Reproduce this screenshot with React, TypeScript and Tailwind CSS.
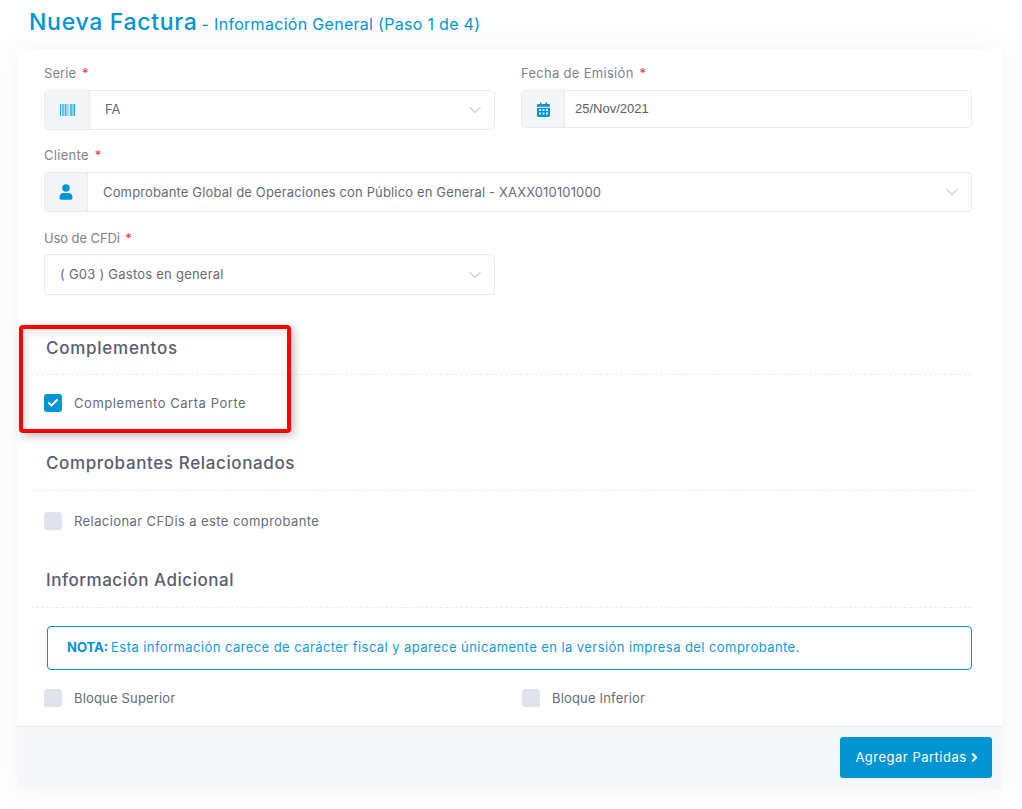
import React from "react";
import { ChevronDown, ChevronRight, Check } from "lucide-react";

const Label = ({ text, className = "" }: { text: string; className?: string }) => (
  <div className={`h-[17px] text-[13px] leading-[17px] text-[#80828f] ${className}`}>
    {text} <span className="ml-[2px] text-[#f0333f]">*</span>
  </div>
);

const Addon = ({ w, children }: { w: string; children: React.ReactNode }) => (
  <div className={`flex shrink-0 items-center justify-center self-stretch border-r border-[#e9ebf3] bg-[#f3f5f9] ${w}`}>{children}</div>
);

const Barcode = () => (
  <svg width="15" height="12" viewBox="0 0 15 12">
    <rect x="0" width="1" height="12" fill="#2ca5dc" />
    <rect x="1" width="1" height="12" fill="#d6eef9" />
    <rect x="2" width="2" height="12" fill="#6fc1e6" />
    <rect x="4" width="1" height="12" fill="#b5dff2" />
    <rect x="5" width="1" height="12" fill="#3dacdf" />
    <rect x="6" width="1" height="12" fill="#8fd0ec" />
    <rect x="7" width="2" height="12" fill="#a5daf1" />
    <rect x="9" width="1" height="12" fill="#d6eef9" />
    <rect x="10" width="2" height="12" fill="#5cb9e3" />
    <rect x="12" width="2" height="12" fill="#8fd0ec" />
    <rect x="14" width="1" height="12" fill="#2ca5dc" />
  </svg>
);

const User = () => (
  <svg width="14" height="16" viewBox="0 0 14 16" fill="#0094d2">
    <circle cx="7" cy="4" r="3.8" />
    <path d="M0.5 13.2C0.5 10.6 2.3 9 4.5 9h5c2.2 0 4 1.6 4 4.2v.8c0 1-.8 1.7-1.7 1.7H2.2C1.3 15.7.5 15 .5 14z" />
  </svg>
);

const Calendar = () => (
  <svg width="13" height="15" viewBox="0 0 13 15">
    <path fill="#0094d2" d="M1.3 2H3V.6h1.4V2h4.2V.6H10V2h1.7c.7 0 1.3.6 1.3 1.3V13.5c0 .8-.6 1.4-1.3 1.4H1.3C.6 14.9 0 14.3 0 13.5V3.3C0 2.6.6 2 1.3 2z" />
    <g fill="#ffffff">
      <rect x="0" y="4.8" width="13" height="1" />
      <rect x="2" y="7.2" width="2" height="1.8" />
      <rect x="5.5" y="7.2" width="2" height="1.8" />
      <rect x="9" y="7.2" width="2" height="1.8" />
      <rect x="2" y="10.6" width="2" height="1.8" />
      <rect x="5.5" y="10.6" width="2" height="1.8" />
      <rect x="9" y="10.6" width="2" height="1.8" />
    </g>
  </svg>
);

const Chevron = () => <ChevronDown size={20} strokeWidth={0.9} className="mr-[9px] shrink-0 text-[#8a8d99]" />;

const SectionHeading = ({ text, className = "" }: { text: string; className?: string }) => (
  <div className={`-ml-[13px] border-b border-dashed border-[#e9ebf1] pl-[15px] ${className}`}>
    <h3 className="text-[17px] font-medium leading-[24px] text-[#595d6e]">{text}</h3>
  </div>
);

const CheckRow = ({ label, checked = false, className = "" }: { label: string; checked?: boolean; className?: string }) => (
  <div className={`flex items-center gap-[12px] ${className}`}>
    <span className={`flex h-[18px] w-[18px] shrink-0 items-center justify-center rounded-[3px] ${checked ? "bg-[#0094d2]" : "bg-[#e0e3ec]"}`}>
      {checked && <Check size={12} strokeWidth={4} className="text-white" />}
    </span>
    <span className="text-[13px] leading-[18px] text-[#646c7a]">{label}</span>
  </div>
);

export default function App() {
  return (
    <div
      className="relative h-[809px] w-[1022px] overflow-hidden bg-white pt-[7px] text-[#646c7a]"
      style={{ fontFamily: "Inter, 'Noto Sans', sans-serif" }}
    >
      <h1 className="ml-[29px] flex h-[30px] items-baseline text-[#0094d2]">
        <span className="text-[23px] font-medium leading-[30px] tracking-[0.7px]">Nueva Factura</span>
        <span className="ml-[4px] text-[16px] leading-[30px] tracking-[0.3px]">- Información General (Paso 1 de 4)</span>
      </h1>

      <div className="ml-[17px] mt-[12px] w-[985px] shadow-[0_0_30px_rgba(82,63,105,0.06)]">
        <div className="h-[677px] pl-[27px] pr-[30px] pt-[16px]">
          <div className="grid grid-cols-2 gap-x-[26px]">
            <div>
              <Label text="Serie" className="tracking-[0.1px]" />
              <div className="mt-[8px] flex h-[40px] items-center rounded-[4px] border border-[#e9ebf3]">
                <Addon w="w-[45px]"><Barcode /></Addon>
                <span className="ml-[15px] flex-1 text-[13px] text-[#646c7a]">FA</span>
                <Chevron />
              </div>
            </div>
            <div>
              <Label text="Fecha de Emisión" className="tracking-[0.3px]" />
              <div className="mt-[8px] flex h-[38px] items-center rounded-[4px] border border-[#e9ebf3]">
                <Addon w="w-[43px]"><Calendar /></Addon>
                <span className="ml-[10px] text-[13px] text-[#595d6e]" style={{ fontFamily: "'Liberation Sans', sans-serif" }}>25/Nov/2021</span>
              </div>
            </div>
          </div>

          <Label text="Cliente" className="mt-[17px] tracking-[0.3px]" />
          <div className="mt-[8px] flex h-[40px] items-center rounded-[4px] border border-[#e9ebf3]">
            <Addon w="w-[43px]"><User /></Addon>
            <span className="ml-[15px] flex-1 pt-px text-[13px] tracking-[0.15px] text-[#646c7a]">Comprobante Global de Operaciones con Público en General - XAXX010101000</span>
            <Chevron />
          </div>

          <Label text="Uso de CFDi" className="mt-[18px] tracking-[-0.1px]" />
          <div className="mt-[7px] flex h-[41px] w-[451px] items-center rounded-[4px] border border-[#e9ebf3]">
            <span className="ml-[15px] flex-1 text-[13px] tracking-[0.24px] text-[#646c7a]">( G03 ) Gastos en general</span>
            <Chevron />
          </div>

          <SectionHeading text="Complementos" className="mt-[41px] pb-[14px] tracking-[0.74px]" />
          <CheckRow label="Complemento Carta Porte" checked className="mt-[19px] tracking-[0.55px]" />

          <SectionHeading text="Comprobantes Relacionados" className="mt-[39px] pb-[15px] tracking-[0.62px]" />
          <CheckRow label="Relacionar CFDis a este comprobante" className="mt-[21px] tracking-[0.41px]" />

          <SectionHeading text="Información Adicional" className="mt-[38px] pb-[15px] tracking-[0.52px]" />

          <div className="ml-[3px] mt-[18px] flex h-[44px] items-center rounded-[4px] border border-[#0094d2] pl-[19px] text-[13px] tracking-[0.43px] text-[#0f9bd7]">
            <strong className="mr-[3px] font-bold tracking-normal text-[#0094d2]">NOTA:</strong>
            Esta información carece de carácter fiscal y aparece únicamente en la versión impresa del comprobante.
          </div>

          <div className="mt-[19px] grid grid-cols-2 gap-x-[26px] tracking-[0.17px]">
            <CheckRow label="Bloque Superior" />
            <CheckRow label="Bloque Inferior" className="ml-px" />
          </div>
        </div>

        <div className="flex h-[63px] justify-end border-t border-[#e9ebf3] bg-[#f6f7fa] pr-[10px] pt-[10px]">
          <button className="flex h-[41px] w-[152px] items-center justify-center rounded-[3px] bg-[#0094d2] pl-[4px] text-[13px] tracking-[0.5px] text-white">
            Agregar Partidas
            <ChevronRight size={13} strokeWidth={4} className="ml-[1px]" />
          </button>
        </div>
      </div>

      <div className="absolute left-[19px] top-[325px] h-[108px] w-[272px] rounded-[4px] border-[4px] border-[#ff0000] shadow-[3px_3px_10px_rgba(0,0,0,0.25),inset_3px_3px_8px_rgba(0,0,0,0.12)]" />
    </div>
  );
}
